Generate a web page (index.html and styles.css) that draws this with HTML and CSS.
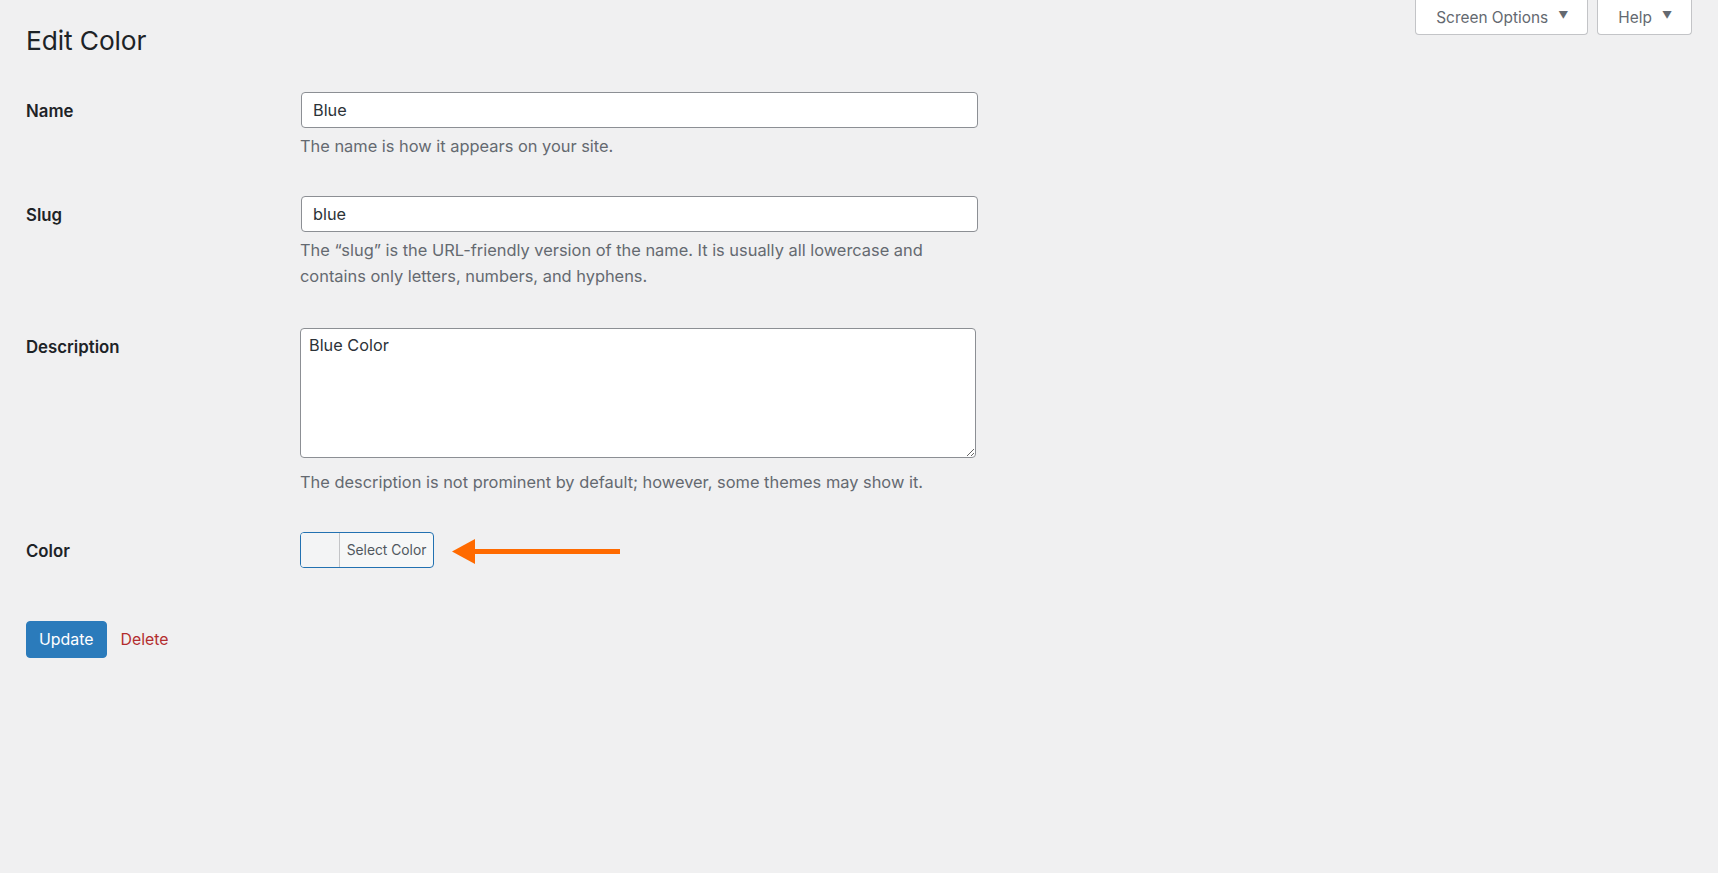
FILE: index.html
```html
<!DOCTYPE html>
<html lang="en">
<head>
<meta charset="utf-8">
<title>Edit Color</title>
<link rel="stylesheet" href="styles.css">
</head>
<body>
<div class="wrap">
  <header class="top">
    <h1 class="title">Edit Color</h1>
    <div class="meta-links">
      <button class="meta-btn">Screen Options <span class="caret">&#9660;</span></button>
      <button class="meta-btn">Help <span class="caret">&#9660;</span></button>
    </div>
  </header>

  <form class="form">
    <div class="row">
      <label class="label" for="name">Name</label>
      <div class="field">
        <input class="input" id="name" type="text" value="Blue">
        <p class="desc">The name is how it appears on your site.</p>
      </div>
    </div>

    <div class="row">
      <label class="label" for="slug">Slug</label>
      <div class="field">
        <input class="input" id="slug" type="text" value="blue">
        <p class="desc">The “slug” is the URL-friendly version of the name. It is usually all lowercase and contains only letters, numbers, and hyphens.</p>
      </div>
    </div>

    <div class="row row-textarea">
      <label class="label" for="description">Description</label>
      <div class="field">
        <textarea class="textarea" id="description">Blue Color</textarea>
        <p class="desc desc-after-area">The description is not prominent by default; however, some themes may show it.</p>
      </div>
    </div>

    <div class="row">
      <span class="label">Color</span>
      <div class="field field-inline">
        <button type="button" class="color-result">
          <span class="swatch"></span>
          <span class="color-text">Select Color</span>
        </button>
        <svg class="arrow" width="168" height="25" viewBox="0 0 168 25" aria-hidden="true">
          <polygon points="0,12.5 23,0 23,25" fill="#ff6a00"/>
          <rect x="22" y="10" width="146" height="5" fill="#ff6a00"/>
        </svg>
      </div>
    </div>

    <div class="actions">
      <button type="button" class="btn-primary">Update</button>
      <a class="delete" href="#">Delete</a>
    </div>
  </form>
</div>
</body>
</html>
```

FILE: styles.css
```css
* { box-sizing: border-box; }

html, body {
  margin: 0;
  padding: 0;
  background: #f0f0f1;
}

body {
  font-family: Inter, "Noto Sans", "Liberation Sans", sans-serif;
  color: #1d2327;
  font-size: 16px;
}

.wrap {
  padding: 0 26px;
}

.top {
  display: flex;
  justify-content: space-between;
  align-items: flex-start;
}

.title {
  margin: 23px 0 0;
  font-size: 26.3px;
  line-height: 36px;
  font-weight: 400;
  color: #1d2327;
  letter-spacing: -0.1px;
}

.meta-links {
  display: flex;
  gap: 9px;
}

.meta-btn {
  font-family: inherit;
  font-size: 15.4px;
  color: #646970;
  background: #fff;
  border: 1px solid #c3c4c7;
  border-top: none;
  border-radius: 0 0 4px 4px;
  height: 35px;
  padding: 0 19px 0 20px;
  display: flex;
  align-items: center;
  gap: 10px;
  cursor: pointer;
}

.caret {
  font-size: 10px;
  color: #646970;
  position: relative;
  top: -2px;
}

.form {
  margin-top: 33px;
  display: flex;
  flex-direction: column;
  gap: 37px;
}

.row {
  display: flex;
  align-items: flex-start;
}

.row-textarea {
  margin-top: 2px;
}

.label {
  width: 274px;
  flex: none;
  font-size: 16.8px;
  font-weight: 600;
  line-height: 36px;
  padding-top: 1px;
  color: #1d2327;
}

.field {
  width: 678px;
}

.field-inline {
  display: flex;
  align-items: center;
}

.input {
  display: block;
  width: 677px;
  height: 36px;
  margin-left: 1px;
  padding: 0 11px;
  font-family: inherit;
  font-size: 16.3px;
  color: #2c3338;
  background: #fff;
  border: 1px solid #8c8f94;
  border-radius: 4px;
  outline: none;
}

.textarea {
  display: block;
  width: 676px;
  height: 130px;
  padding: 5px 8px;
  font-family: inherit;
  font-size: 16.3px;
  line-height: 1.4;
  color: #2c3338;
  background: #fff;
  border: 1px solid #8c8f94;
  border-radius: 4px;
  resize: vertical;
  outline: none;
}

.desc {
  margin: 5px 0 0;
  font-size: 16.4px;
  line-height: 26px;
  color: #646970;
  max-width: 678px;
}

.desc-after-area {
  margin-top: 11px;
}

.color-result {
  display: flex;
  align-items: stretch;
  height: 36px;
  width: 134px;
  padding: 0;
  border: 1px solid #2271b1;
  border-radius: 4px;
  background: #f6f7f7;
  overflow: hidden;
  font-family: inherit;
  cursor: pointer;
}

.swatch {
  width: 39px;
  flex: none;
  background: #f3f4f5;
  border-right: 1px solid #c3c4c7;
}

.color-text {
  flex: 1;
  display: flex;
  align-items: center;
  justify-content: center;
  font-size: 13.8px;
  color: #50575e;
}

.arrow {
  display: block;
  margin-left: 18px;
  margin-top: 3px;
}

.actions {
  display: flex;
  align-items: center;
  gap: 14px;
  margin-top: 15px;
}

.btn-primary {
  height: 37px;
  padding: 0 12px;
  font-family: inherit;
  font-size: 15.9px;
  color: #fff;
  background: #2b7bbb;
  border: 1px solid #2b7bbb;
  border-radius: 4px;
  cursor: pointer;
}

.delete {
  font-size: 15.8px;
  color: #b32d2e;
  text-decoration: none;
}
```
